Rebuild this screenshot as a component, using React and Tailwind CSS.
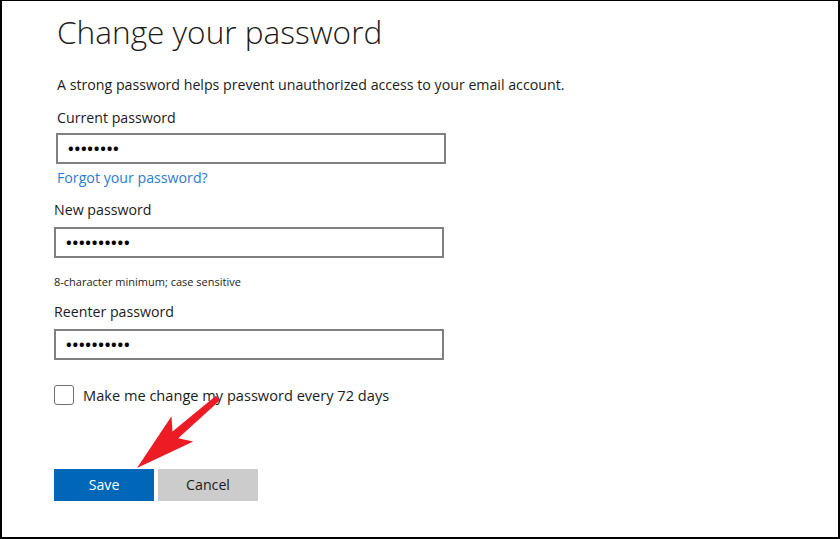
import React from "react";

// Outlook "Change your password" form with a red annotation arrow over the Save button

const FONT = { fontFamily: "'Open Sans', 'Noto Sans', sans-serif" };

function Dots({ count }) {
  return (
    <span className="text-[15px] font-bold leading-none tracking-[0.8px] text-black select-none">
      {"•".repeat(count)}
    </span>
  );
}

function PasswordBox({ count, className = "" }) {
  return (
    <div className={`w-[390px] h-[31px] border-2 border-[#808080] flex items-center pl-[10px] ${className}`}>
      <Dots count={count} />
    </div>
  );
}

export default function App() {
  return (
    <div
      className="relative w-[840px] h-[539px] bg-white border-black border-l-2 border-t border-r-2 border-b-2 overflow-hidden text-[#1b1b1b]"
      style={FONT}
    >
      <div className="pl-[52px] pt-[11px]">
        <div className="ml-[3px]">
          <h1 className="text-[31.6px] font-light leading-[40px] text-[#1b1b1b]">Change your password</h1>
          <p className="mt-[23px] text-[14.2px] leading-[20px]">
            A strong password helps prevent unauthorized access to your email account.
          </p>
          <div className="mt-[13px] text-[14.2px] leading-[20px]">Current password</div>
          <PasswordBox count={8} className="mt-[5px] -ml-[1px]" />
          <a href="#" className="block mt-[4px] text-[14.2px] leading-[20px] text-[#2b7cd3]">
            Forgot your password?
          </a>
        </div>

        <div className="mt-[12px] text-[14.2px] leading-[20px] font-medium">New password</div>
        <PasswordBox count={10} className="mt-[7px]" />
        <div className="mt-[16px] text-[11px] leading-[16px]">8-character minimum; case sensitive</div>
        <div className="mt-[12px] text-[14.2px] leading-[20px] font-medium">Reenter password</div>
        <PasswordBox count={10} className="mt-[7px]" />

        <label className="mt-[25px] flex items-center gap-[9px]">
          <span className="w-[20px] h-[20px] border border-[#707070] rounded-[3px] bg-white" />
          <span className="text-[14.6px] leading-[20px] font-medium">Make me change my password every 72 days</span>
        </label>

        <div className="mt-[64px] flex gap-[4px]">
          <button className="w-[100px] h-[32px] bg-[#0067b8] text-white text-[14.2px]">Save</button>
          <button className="w-[100px] h-[32px] bg-[#cccccc] text-[#1b1b1b] text-[14.2px]">Cancel</button>
        </div>
      </div>

      {/* red annotation arrow */}
      <svg className="absolute left-[-2px] top-[-1px] pointer-events-none" width="840" height="539" viewBox="0 0 840 539">
        <polygon
          points="137,468 171.5,416.2 172.5,431.5 216,395.7 220,400.3 178.2,438.3 193.3,441.4"
          fill="#ed1c24"
          strokeLinejoin="round"
        />
      </svg>
    </div>
  );
}
